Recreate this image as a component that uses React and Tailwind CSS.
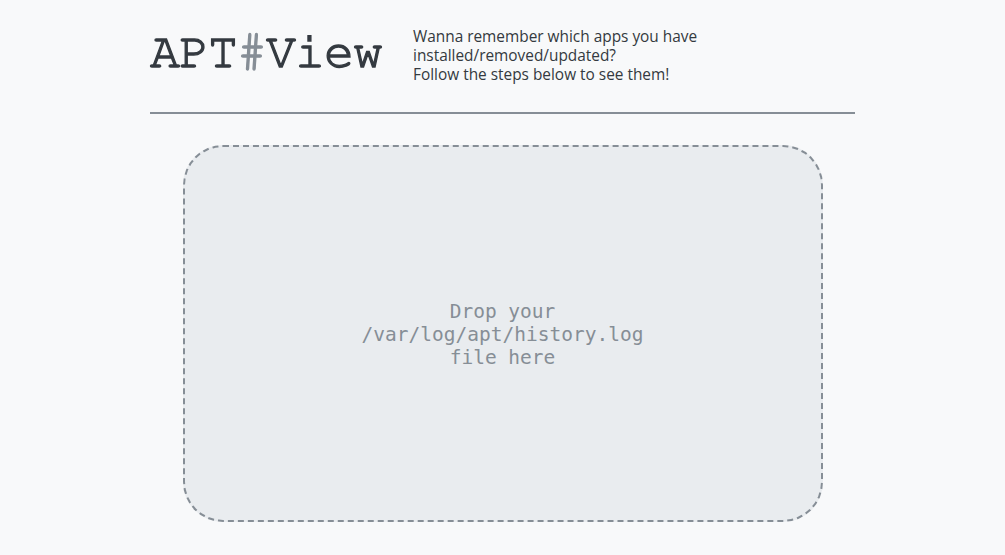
export default function App() {
  return (
    <div className="min-h-[555px] bg-[#f8f9fa]">
      <div className="w-[705px] mx-auto">
        <header className="flex items-center gap-8 pt-[27px] pb-[28px] border-b-2 border-[#868e96]">
          <h1 className="-mt-[8px] text-[50px] leading-none text-[#343a40] font-['Nimbus_Mono_PS','FreeMono','Courier','Liberation_Mono',monospace] tracking-[-1px] [-webkit-text-stroke-width:1.3px]">
            APT<span className="text-[#868e96]">#</span>View
          </h1>
          <div className="-ml-px text-[15.4px] leading-[19px] text-[#343a40] font-['Open_Sans',sans-serif] w-[290px]">
            <p>Wanna remember which apps you have installed/removed/updated?</p>
            <p>Follow the steps below to see them!</p>
          </div>
        </header>
      </div>
      <div className="w-[640px] h-[377px] mx-auto mt-[31px] rounded-[40px] border-2 border-dashed border-[#868e96] bg-[#e9ecef] flex items-center justify-center">
        <p className="mt-[2px] w-[290px] text-center text-[19.5px] leading-[23px] text-[#868e96] font-['DejaVu_Sans_Mono',monospace]">
          Drop your /var/log/apt/history.log file here
        </p>
      </div>
    </div>
  );
}
